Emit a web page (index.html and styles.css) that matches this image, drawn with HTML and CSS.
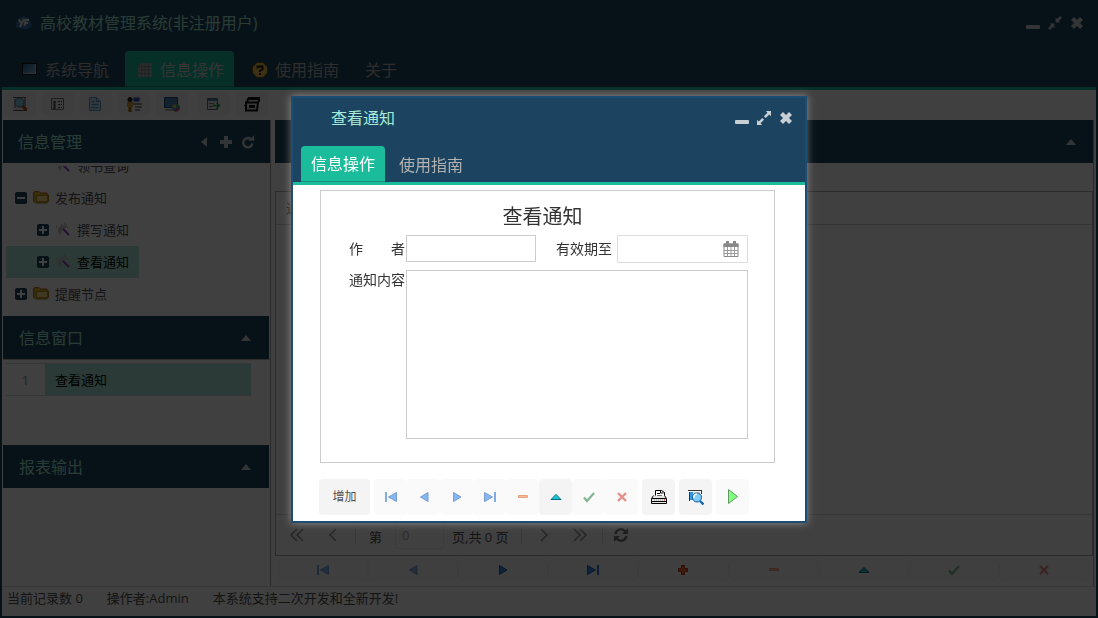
FILE: index.html
```html
<!DOCTYPE html>
<html lang="zh-CN">
<head>
    <meta charset="UTF-8">
    <meta name="viewport" content="width=device-width, initial-scale=1.0">
    <title>高校教材管理系统</title>
    <link rel="stylesheet" href="styles.css">
</head>
<body>
    <!-- Icon set -->
    <svg class="sprite" aria-hidden="true">
        <symbol id="i-min" viewBox="0 0 14 14"><rect x="0" y="9" width="14" height="4" rx="1" fill="currentColor"/></symbol>
        <symbol id="i-restore" viewBox="0 0 14 14"><path fill="currentColor" d="M7.6 1.600v4.800h4.800L10.900 4.900 14 1.800 12.200 0 9.100 3.100zM6.400 12.400V7.600H1.600l1.500 1.500L0 12.200 1.800 14l3.100-3.100z"/></symbol>
        <symbol id="i-max" viewBox="0 0 14 14"><path fill="currentColor" d="M14 0v5.200l-1.700-1.700-3.600 3.600-1.800-1.800 3.600-3.600L8.800 0zM0 14V8.800l1.700 1.700 3.600-3.600 1.800 1.800-3.600 3.600L5.200 14z"/></symbol>
        <symbol id="i-close" viewBox="0 0 14 14"><path d="M2.500 2.500l9 9M11.500 2.500l-9 9" stroke="currentColor" stroke-width="4.200" fill="none"/></symbol>
        <symbol id="i-left" viewBox="0 0 14 14"><path d="M10 2v10L4 7z" fill="currentColor"/></symbol>
        <symbol id="i-up" viewBox="0 0 14 14"><path d="M2 10h10L7 4z" fill="currentColor"/></symbol>
        <symbol id="i-plus" viewBox="0 0 14 14"><path d="M7 1v12M1 7h12" stroke="currentColor" stroke-width="4"/></symbol>
        <symbol id="i-redo" viewBox="0 0 14 14"><path d="M11.400 8.400A4.600 4.600 0 1 1 9.600 4" fill="none" stroke="currentColor" stroke-width="2.400"/><path d="M7.600 5.800h5.600V0z" fill="currentColor"/></symbol>
        <symbol id="i-minusbox" viewBox="0 0 12 12"><rect width="12" height="12" rx="2" fill="#1c4460"/><path d="M2 6h8" stroke="#fff" stroke-width="2"/></symbol>
        <symbol id="i-plusbox" viewBox="0 0 12 12"><rect width="12" height="12" rx="2" fill="#1c4460"/><path d="M2 6h8M6 2v8" stroke="#fff" stroke-width="2"/></symbol>
        <symbol id="i-folder" viewBox="0 0 16 16"><path d="M.5 3l1-1.500h4.500L7.500 3h6.500v2h1.500v6.500l-2 1.500h-11L.5 11z" fill="#e0b030" stroke="#a47810"/><path d="M3.500 11.500V5.500h11V11l-1 .5z" fill="#ffe08c" stroke="#b58a1c"/></symbol>
        <symbol id="i-wand" viewBox="0 0 16 16"><path d="M6 2l3 2 3-2-1 4-3 1-2 4-3 1 1-4-2-2 3-1z" fill="#c4c4c4"/><path d="M1 5h2M3 9h2M5 12h2M9 2h2M12 5h2" stroke="#888" stroke-dasharray="1 1"/><path d="M8 7l6 6" stroke="#9a3bc0" stroke-width="2"/></symbol>
        <symbol id="i-logo" viewBox="0 0 16 16"><path d="M3 13a3.500 3.500 0 0 1-1-7 5.500 5.500 0 0 1 8-4 4.500 4.500 0 0 1 4 4.500 3.500 3.500 0 0 1 0 6q-5 3-11 .5z" fill="#2f75a8"/><path d="M2.500 4.500l3 4M8 4l-4 8M13 5H9.500L8.500 11M9 8h3" stroke="#f2e4e4" stroke-width="1.800" fill="none"/></symbol>
        <symbol id="i-screen" viewBox="0 0 16 16"><linearGradient id="g1" x2="1" y2="1"><stop stop-color="#1d5d94"/><stop offset="1" stop-color="#8cc4e8"/></linearGradient><rect x=".5" y="1.500" width="14" height="11" fill="url(#g1)" stroke="#111"/><path d="M1.500 11.500h12v-9" fill="none" stroke="#a8c8dc"/></symbol>
        <symbol id="i-grid" viewBox="0 0 16 16"><path d="M4 1h11v14H1V4z" fill="#aaa"/><path d="M1 4.500h14M1 8h14M1 11.500h14M4.500 1v14M8 1v14M11.500 1v14" stroke="#5f8f84" stroke-width=".7" fill="none"/></symbol>
        <symbol id="i-help" viewBox="0 0 16 16"><path d="M5 .5h6L15.500 5v6L11 15.500H5L.5 11V5z" fill="#edc14c" stroke="#78480a"/><path d="M5.500 6.500V4.500h5v3L8 8.500V10M8 11v2" stroke="#111" stroke-width="1.800" fill="none"/></symbol>
        <symbol id="i-find" viewBox="0 0 16 16"><path d="M3 1h10v14H3z" fill="#ddd"/><path d="M1 1.500h13M1 14.500h14M3 3v9M13 2v9" stroke="#555"/><circle cx="7.500" cy="6.500" r="4.500" fill="#86c9e6" stroke="#397f9c"/><path d="M10.500 10l4 4" stroke="#b64d17" stroke-width="3"/></symbol>
        <symbol id="i-list" viewBox="0 0 16 16"><path d="M1.500 2.500h12v11h-12z" fill="#eee" stroke="#777"/><path d="M3 5h3v8H3z" fill="#5da2cc"/><path d="M8 5.500h4M8 8.500h4M8 11.500h4M4.500 5v8" stroke="#444" stroke-dasharray="2 1"/></symbol>
        <symbol id="i-doc" viewBox="0 0 16 16"><path d="M1.500 1.500h7l4 4v9h-11z" fill="#b8ddf4" stroke="#5f9ec7"/><path d="M8.500 1.500v4h4M3.500 5.500h3M3.500 8.500h7M3.500 11.500h7" fill="none" stroke="#4f94c2"/></symbol>
        <symbol id="i-user" viewBox="0 0 16 16"><path d="M7 1h7v5H7z" fill="#3554b4" stroke="#ddd"/><path d="M7 8h9M9 11h7M9 14h5" stroke="#999" stroke-width="2"/><circle cx="4" cy="3.500" r="2.500" fill="#222"/><path d="M1 6h6v5H6v5H2v-5H1z" fill="#d79b3c"/><path d="M4 11v5" stroke="#6b4a13"/></symbol>
        <symbol id="i-chart" viewBox="0 0 16 16"><path d="M.5 1.500h13v10H.5z" fill="#4785b5" stroke="#174a70"/><path d="M1 14h8" stroke="#aaa" stroke-width="2"/><circle cx="12" cy="12" r="3.800" fill="#e4bd3c"/><path d="M12 12V8a4 4 0 0 1 4 4z" fill="#39a36a"/><path d="M12 12h4a4 4 0 0 1-6 3z" fill="#ae4aa8"/><path d="M12 12l-2 3a4 4 0 0 1-2-4z" fill="#4c8ddb"/></symbol>
        <symbol id="i-export" viewBox="0 0 16 16"><path d="M1.500 2.500h10v11h-10z" fill="#e8e8e8" stroke="#666"/><path d="M2 4h9" stroke="#4386b8" stroke-width="2"/><path d="M3 7.500h5M3 10.500h4" stroke="#777"/><path d="M7 9.500h6M10.500 7l3 2.500-3 3" stroke="#2b9e42" stroke-width="1.600" fill="none"/></symbol>
        <symbol id="i-print" viewBox="0 0 16 16"><path d="M4 2h12M3 6l1-3h11v3M2 6.500h12l-1 8H2z" fill="#ddd" stroke="#111" stroke-width="2"/><path d="M5 10.500h6" stroke="#111" stroke-width="3"/><path d="M0 9.500h2" stroke="#111"/></symbol>
        <symbol id="i-first" viewBox="0 0 16 16"><path d="M3 3v10" stroke="#2f79d5" stroke-width="2"/><path d="M13.500 3.500v9L5.500 8z" fill="#3b8cf0" stroke="#1f5fae"/></symbol>
        <symbol id="i-prev" viewBox="0 0 16 16"><path d="M12 3.500v9L4.500 8z" fill="#3b8cf0" stroke="#1f5fae"/></symbol>
        <symbol id="i-next" viewBox="0 0 16 16"><path d="M4.500 3.500v9L12 8z" fill="#3b8cf0" stroke="#1f5fae"/></symbol>
        <symbol id="i-last" viewBox="0 0 16 16"><path d="M13 3v10" stroke="#2f79d5" stroke-width="2"/><path d="M2.500 3.500v9l8-4.500z" fill="#3b8cf0" stroke="#1f5fae"/></symbol>
        <symbol id="i-add" viewBox="0 0 16 16"><path d="M6.500 3.500h3v3h3v3h-3v3h-3v-3h-3v-3h3z" fill="#ff6a32" stroke="#b83408"/></symbol>
        <symbol id="i-del" viewBox="0 0 16 16"><path d="M3.500 6.500h9v2h-9z" fill="#ff8e50" stroke="#e0682d"/></symbol>
        <symbol id="i-edit" viewBox="0 0 16 16"><path d="M3 10.500L8 5.500l5 5z" fill="#16c4dc" stroke="#08707f"/></symbol>
        <symbol id="i-ok" viewBox="0 0 16 16"><path d="M3 8.500l3 3.500 7-8" stroke="#358a52" stroke-width="2.200" fill="none"/></symbol>
        <symbol id="i-cancel" viewBox="0 0 16 16"><path d="M4 4l8 8M12 4l-8 8" stroke="#d84a3c" stroke-width="2.400"/></symbol>
        <symbol id="i-printer" viewBox="0 0 16 16"><path d="M4.500 8V1.500h6l3 2V8" fill="#fff" stroke="#000"/><path d="M6 4.500h3M6 6.500h5M9.500 1v3h3" stroke="#000" fill="none"/><path d="M2.500 6.500L.5 9.500v5h15v-5l-2-3" fill="#e5e5e5" stroke="#000"/><path d="M1 9.500h14M1 12.500h14" stroke="#000"/><path d="M3 11h9" stroke="#999" stroke-dasharray="1 1"/><path d="M13 11h1" stroke="#e02"/></symbol>
        <symbol id="i-preview" viewBox="0 0 16 16"><path d="M0 1.500h14M1.500 3v9M13.500 2v3" stroke="#333"/><path d="M2 3h3v8H2z" fill="#3298e0"/><path d="M5 3h7v3H5z" fill="#ccc"/><circle cx="9" cy="8.500" r="4.500" fill="#7fcaff" stroke="#145a94"/><path d="M6 9a3 3 0 0 1 3-4" stroke="#fff" fill="none" stroke-width="1.500"/><path d="M12 12l3.500 3.500" stroke="#146cae" stroke-width="2.400"/></symbol>
        <symbol id="i-run" viewBox="0 0 16 16"><path d="M3.500 .5v14l9-7z" fill="#80ff80" stroke="#5f9a5f"/></symbol>
        <symbol id="i-cal" viewBox="0 0 16 16"><path d="M1 3h14v12.500H1z" fill="none" stroke="#888"/><path d="M.5 2.500h15V6H.5z" fill="#888"/><path d="M4.500 0v4M11.500 0v4" stroke="#888" stroke-width="3"/><path d="M1 9.500h14M1 12.500h14M4.500 6v9M8 6v9M11.500 6v9" stroke="#999"/></symbol>
        <symbol id="i-dleft" viewBox="0 0 16 16"><path d="M8 2L2 8l6 6M14 2L8 8l6 6" stroke="currentColor" stroke-width="1.600" fill="none"/></symbol>
        <symbol id="i-sleft" viewBox="0 0 16 16"><path d="M11 2L5 8l6 6" stroke="currentColor" stroke-width="1.600" fill="none"/></symbol>
        <symbol id="i-sright" viewBox="0 0 16 16"><path d="M5 2l6 6-6 6" stroke="currentColor" stroke-width="1.600" fill="none"/></symbol>
        <symbol id="i-dright" viewBox="0 0 16 16"><path d="M2 2l6 6-6 6M8 2l6 6-6 6" stroke="currentColor" stroke-width="1.600" fill="none"/></symbol>
        <symbol id="i-sync" viewBox="0 0 16 16"><path d="M2.500 7a5.600 5.600 0 0 1 10-2.500M13.500 9a5.600 5.600 0 0 1-10 2.500" fill="none" stroke="currentColor" stroke-width="2.400"/><path d="M15 1v6H9zM1 15V9h6z" fill="currentColor"/></symbol>
    </svg>

    <div class="window">
        <header class="head">
            <div class="titlebar">
                <svg class="icon"><use href="#i-logo"/></svg>
                <h1>高校教材管理系统(非注册用户)</h1>
                <div class="tools">
                    <button aria-label="最小化"><svg><use href="#i-min"/></svg></button>
                    <button aria-label="还原"><svg><use href="#i-restore"/></svg></button>
                    <button aria-label="关闭"><svg><use href="#i-close"/></svg></button>
                </div>
            </div>
            <nav class="tabs">
                <a href="#"><svg class="icon"><use href="#i-screen"/></svg>系统导航</a>
                <a href="#" class="active"><svg class="icon"><use href="#i-grid"/></svg>信息操作</a>
                <a href="#"><svg class="icon"><use href="#i-help"/></svg>使用指南</a>
                <a href="#" class="plain">关于</a>
            </nav>
        </header>

        <div class="toolbar">
            <div class="group">
                <button aria-label="查询"><svg class="icon"><use href="#i-find"/></svg></button>
                <button aria-label="列表"><svg class="icon"><use href="#i-list"/></svg></button>
                <button aria-label="文档"><svg class="icon"><use href="#i-doc"/></svg></button>
                <button aria-label="用户"><svg class="icon"><use href="#i-user"/></svg></button>
                <button aria-label="统计"><svg class="icon"><use href="#i-chart"/></svg></button>
            </div>
            <div class="group">
                <button aria-label="导出"><svg class="icon"><use href="#i-export"/></svg></button>
                <button aria-label="打印"><svg class="icon"><use href="#i-print"/></svg></button>
            </div>
        </div>

        <div class="content">
            <aside class="sidebar">
                <section>
                    <div class="panel-head">
                        <h2>信息管理</h2>
                        <div class="tools">
                            <button aria-label="折叠"><svg><use href="#i-left"/></svg></button>
                            <button aria-label="添加"><svg><use href="#i-plus"/></svg></button>
                            <button aria-label="刷新"><svg><use href="#i-redo"/></svg></button>
                        </div>
                    </div>
                    <ul class="tree">
                        <li class="child leaf"><svg class="icon"><use href="#i-wand"/></svg>领书查询</li>
                        <li><svg class="toggle"><use href="#i-minusbox"/></svg><svg class="icon"><use href="#i-folder"/></svg>发布通知</li>
                        <li class="child"><svg class="toggle"><use href="#i-plusbox"/></svg><svg class="icon"><use href="#i-wand"/></svg>撰写通知</li>
                        <li class="child selected"><svg class="toggle"><use href="#i-plusbox"/></svg><svg class="icon"><use href="#i-wand"/></svg>查看通知</li>
                        <li><svg class="toggle"><use href="#i-plusbox"/></svg><svg class="icon"><use href="#i-folder"/></svg>提醒节点</li>
                    </ul>
                </section>
                <section>
                    <div class="panel-head">
                        <h2>信息窗口</h2>
                        <div class="tools"><button aria-label="折叠"><svg><use href="#i-up"/></svg></button></div>
                    </div>
                    <div class="windows">
                        <table>
                            <tr><td class="num">1</td><td class="name">查看通知</td></tr>
                        </table>
                    </div>
                </section>
                <section>
                    <div class="panel-head">
                        <h2>报表输出</h2>
                        <div class="tools"><button aria-label="折叠"><svg><use href="#i-up"/></svg></button></div>
                    </div>
                </section>
            </aside>

            <main class="main">
                <div class="panel-head">
                    <h2></h2>
                    <div class="tools"><button aria-label="折叠"><svg><use href="#i-up"/></svg></button></div>
                </div>
                <div class="datagrid">
                    <table>
                        <thead><tr><th>通知内容</th></tr></thead>
                    </table>
                    <div class="pager">
                        <button aria-label="首页"><svg class="icon"><use href="#i-dleft"/></svg></button>
                        <button aria-label="上一页"><svg class="icon"><use href="#i-sleft"/></svg></button>
                        <span class="sep"></span>
                        <label for="page">第</label>
                        <input id="page" type="text" value="0">
                        <span class="total">页,共 0 页</span>
                        <span class="sep"></span>
                        <button aria-label="下一页"><svg class="icon"><use href="#i-sright"/></svg></button>
                        <button aria-label="末页"><svg class="icon"><use href="#i-dright"/></svg></button>
                        <span class="sep"></span>
                        <button class="sync" aria-label="刷新"><svg class="icon"><use href="#i-sync"/></svg></button>
                    </div>
                </div>
                <div class="navigator">
                    <button class="off" aria-label="首条"><svg class="icon"><use href="#i-first"/></svg></button>
                    <button class="off" aria-label="上一条"><svg class="icon"><use href="#i-prev"/></svg></button>
                    <button aria-label="下一条"><svg class="icon"><use href="#i-next"/></svg></button>
                    <button aria-label="末条"><svg class="icon"><use href="#i-last"/></svg></button>
                    <button aria-label="新增"><svg class="icon"><use href="#i-add"/></svg></button>
                    <button class="off" aria-label="删除"><svg class="icon"><use href="#i-del"/></svg></button>
                    <button aria-label="编辑"><svg class="icon"><use href="#i-edit"/></svg></button>
                    <button class="off" aria-label="保存"><svg class="icon"><use href="#i-ok"/></svg></button>
                    <button class="off" aria-label="取消"><svg class="icon"><use href="#i-cancel"/></svg></button>
                </div>
            </main>
        </div>

        <footer class="status">
            <span>当前记录数 0</span>
            <span>操作者:Admin</span>
            <span>本系统支持二次开发和全新开发!</span>
        </footer>
    </div>

    <!-- Notice dialog -->
    <div class="mask">
        <div class="dialog" role="dialog" aria-label="查看通知">
            <header class="head">
                <div class="titlebar">
                    <h1>查看通知</h1>
                    <div class="tools">
                        <button aria-label="最小化"><svg><use href="#i-min"/></svg></button>
                        <button aria-label="最大化"><svg><use href="#i-max"/></svg></button>
                        <button aria-label="关闭"><svg><use href="#i-close"/></svg></button>
                    </div>
                </div>
                <nav class="tabs">
                    <a href="#" class="plain active">信息操作</a>
                    <a href="#" class="plain">使用指南</a>
                </nav>
            </header>
            <form class="notice">
                <h2>查看通知</h2>
                <div class="row">
                    <label for="author">作　　者</label>
                    <input id="author" type="text">
                    <label for="expiry" class="second">有效期至</label>
                    <div class="datebox">
                        <input id="expiry" type="text">
                        <button type="button" aria-label="选择日期"><svg class="icon"><use href="#i-cal"/></svg></button>
                    </div>
                </div>
                <div class="row content-row">
                    <label for="body">通知内容</label>
                    <textarea id="body"></textarea>
                </div>
            </form>
            <div class="actions">
                <button class="text">增加</button>
                <div class="strip">
                    <button class="off" aria-label="首条"><svg class="icon"><use href="#i-first"/></svg></button>
                    <button class="off" aria-label="上一条"><svg class="icon"><use href="#i-prev"/></svg></button>
                    <button class="off" aria-label="下一条"><svg class="icon"><use href="#i-next"/></svg></button>
                    <button class="off" aria-label="末条"><svg class="icon"><use href="#i-last"/></svg></button>
                    <button class="off" aria-label="删除"><svg class="icon"><use href="#i-del"/></svg></button>
                    <button aria-label="编辑"><svg class="icon"><use href="#i-edit"/></svg></button>
                    <button class="off" aria-label="保存"><svg class="icon"><use href="#i-ok"/></svg></button>
                    <button class="off" aria-label="取消"><svg class="icon"><use href="#i-cancel"/></svg></button>
                </div>
                <button aria-label="打印"><svg class="icon"><use href="#i-printer"/></svg></button>
                <button aria-label="预览"><svg class="icon"><use href="#i-preview"/></svg></button>
                <button class="pale" aria-label="运行"><svg class="icon"><use href="#i-run"/></svg></button>
            </div>
        </div>
    </div>
</body>
</html>
```

FILE: styles.css
```css
* {
    box-sizing: border-box;
}
body {
    margin: 0;
    font-family: "Open Sans", "Noto Sans CJK SC", sans-serif;
    font-size: 13px;
    line-height: 20px;
    color: #505050;
}
h1, h2 {
    margin: 0;
    font-size: 16px;
    font-weight: normal;
    line-height: 24px;
}
button {
    display: flex;
    align-items: center;
    justify-content: center;
    padding: 0;
    border: 0;
    background: none;
    color: inherit;
    font: inherit;
    cursor: pointer;
}
input, textarea {
    font: inherit;
    color: inherit;
    border: 1px solid #ccc;
    border-radius: 0;
    background: #fff;
    outline: none;
}
a {
    color: inherit;
    text-decoration: none;
}
svg {
    display: block;
}
.sprite {
    position: absolute;
    width: 0;
    height: 0;
}
.icon {
    width: 16px;
    height: 16px;
    flex: none;
}

/* Window frame */
.window {
    display: flex;
    flex-direction: column;
    min-height: 100vh;
    border: 2px solid #1c4460;
    background: #fff;
}
.head {
    background: #1c4460;
    border-bottom: 3px solid #1abc9c;
}
.titlebar {
    display: flex;
    align-items: center;
    height: 42px;
    padding: 0 12px 0 14px;
    color: #a6ead6;
}
.titlebar h1 {
    flex: 1;
    padding-left: 8px;
}
.tools {
    display: flex;
    gap: 8px;
    color: #c8d0d6;
}
.tools svg {
    width: 14px;
    height: 14px;
}
.tabs {
    display: flex;
    gap: 6px;
    padding: 7px 8px 0;
    font-size: 16px;
    line-height: 36px;
    color: #b2b2b2;
}
.tabs a {
    display: flex;
    align-items: center;
    height: 36px;
    padding: 2px 10px 0 12px;
    gap: 7px;
    border-radius: 4px 4px 0 0;
}
.tabs .plain {
    padding: 2px 10px 0;
}
.tabs .active {
    background: #1abc9c;
    border-bottom: 1px solid #148f77;
    color: #fff;
}
.window .tabs .active {
    color: #d0d0d0;
}

/* Toolbar */
.toolbar {
    display: flex;
    gap: 10px;
    padding: 2px 2px 5px;
}
.group {
    display: flex;
    gap: 6px;
}
.toolbar button {
    width: 32px;
    height: 23px;
    border-radius: 4px;
    background: #f7f7f7;
}

/* Panels */
.content {
    display: flex;
    flex: 1;
    gap: 4px;
    padding: 0 2px 0 1px;
}
.panel-head {
    display: flex;
    align-items: center;
    justify-content: space-between;
    height: 43px;
    padding: 0 15px;
    background: #1c4460;
    color: #a6ead6;
}
.sidebar {
    width: 268px;
    border-right: 1px solid #aaa;
}
.sidebar section + section .panel-head {
    margin-right: 1px;
    padding: 1px 16px 0;
}
.tree {
    display: flex;
    flex-direction: column;
    justify-content: flex-end;
    align-items: flex-start;
    height: 150px;
    margin: 3px 0 0;
    padding: 0 3px 6px;
    overflow: hidden;
    list-style: none;
}
.tree li {
    display: flex;
    align-items: center;
    flex: none;
    height: 32px;
    gap: 6px;
    padding: 0 10px 0 9px;
}
.tree .child {
    padding-left: 31px;
}
.tree .leaf {
    padding-left: 49px;
}
.tree .selected {
    background: #ace8d8;
    color: #000;
}
.toggle {
    width: 12px;
    height: 12px;
}
.windows {
    height: 86px;
    padding: 3px 19px 0 3px;
    border-top: 1px solid #bbb;
}
.windows table {
    width: 100%;
    border-collapse: collapse;
}
.windows td {
    height: 32px;
    padding: 0 10px;
    border: solid #c9ddd7;
    border-width: 1px 0;
}
.windows .num {
    width: 39px;
    padding: 0;
    text-align: center;
    color: #888;
}
.windows .name {
    background: #ace8d8;
    color: #000;
}

.main {
    display: flex;
    flex-direction: column;
    flex: 1;
    border-right: 1px solid #aaa;
}
.datagrid {
    display: flex;
    flex-direction: column;
    flex: 1;
    margin-top: 28px;
    border: 1px solid #aaa;
}
.datagrid table {
    width: 100%;
    border-collapse: collapse;
}
.datagrid th {
    height: 32px;
    padding: 0 10px;
    border-bottom: 1px solid #ccc;
    font-weight: normal;
    text-align: left;
}
.pager {
    display: flex;
    align-items: center;
    height: 41px;
    margin-top: auto;
    padding-left: 3px;
    border-top: 1px solid #ddd;
}
.pager label, .total {
    padding-top: 3px;
}
.pager button {
    width: 36px;
    height: 30px;
    color: #999;
}
.pager .sync {
    color: #777;
}
.pager input {
    width: 49px;
    height: 28px;
    margin: 0 8px 0 13px;
    padding: 0 6px;
    border-color: #f0f0f0;
    color: #aaa;
}
.sep {
    height: 16px;
    margin: 0 4px;
    border-left: 1px solid #ddd;
}
.pager label {
    margin-left: 9px;
}
.total {
    margin-right: 8px;
}
.pager .sync {
    width: 28px;
}
.navigator {
    display: flex;
    padding: 3px 4px 5px 3px;
}
.navigator button {
    flex: 1;
    height: 22px;
    border: 1px solid #f4f4f4;
    border-radius: 4px;
    background: #fcfcfc;
}
.off .icon {
    opacity: 0.6;
}
.status {
    display: flex;
    gap: 24px;
    height: 30px;
    padding: 1px 5px;
    border-top: 1px solid #ddd;
}

/* Dialog */
.mask {
    position: fixed;
    inset: 0;
    display: flex;
    align-items: center;
    justify-content: center;
    background: rgba(0, 0, 0, 0.75);
}
.dialog {
    width: 516px;
    border: 2px solid #1c4e75;
    background: #fff;
    box-shadow: 0 0 8px rgba(220, 220, 220, 0.5);
}
.dialog .titlebar {
    height: 40px;
    padding: 0 12px 0 30px;
}
.dialog .tabs {
    gap: 4px;
    padding-top: 8px;
}
.notice {
    margin: 5px 30px 0 27px;
    padding: 14px 26px 23px 28px;
    border: 1px solid #ccc;
    font-size: 14px;
    color: #333;
}
.notice h2 {
    padding-right: 12px;
    font-size: 20px;
    line-height: 24px;
    text-align: center;
}
.row {
    display: flex;
    margin-top: 6px;
}
.row label {
    flex: none;
    width: 57px;
    line-height: 28px;
    white-space: nowrap;
}
.row > input {
    width: 130px;
    height: 27px;
}
.row .second {
    width: 61px;
    margin-left: 20px;
}
.content-row {
    margin-top: 7px;
}
.content-row label {
    line-height: 20px;
}
.datebox {
    display: flex;
    flex: 1;
    min-width: 0;
    height: 28px;
    border: 1px solid #ddd;
}
.datebox input {
    flex: 1;
    min-width: 0;
    border: 0;
}
.datebox button {
    width: 32px;
}
.row textarea {
    flex: 1;
    height: 169px;
    resize: none;
}
.actions {
    display: flex;
    gap: 4px;
    padding: 16px 26px 6px;
}
.strip {
    display: flex;
}
.actions button {
    width: 33px;
    height: 36px;
    border-radius: 4px;
    background: #f4f4f4;
}
.actions .text {
    width: 51px;
    font-size: 12px;
}
.actions .off, .actions .pale {
    background: #fafafa;
}
```
